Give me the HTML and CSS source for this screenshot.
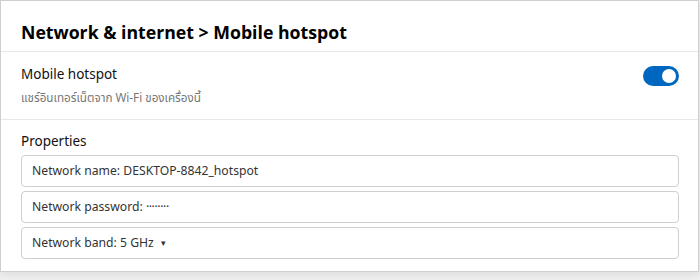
FILE: index.html
```html
<!DOCTYPE html>
<html lang="th">
<head>
<meta charset="utf-8">
<link rel="stylesheet" href="styles.css">
</head>
<body>
<div class="card">
  <div class="header">Network &amp; internet &gt; Mobile hotspot</div>
  <div class="row">
    <div class="row-text">
      <div class="row-title">Mobile hotspot</div>
      <div class="row-sub">แชร์อินเทอร์เน็ตจาก Wi-Fi ของเครื่องนี้</div>
    </div>
    <div class="toggle"><div class="knob"></div></div>
  </div>
  <div class="props">
    <div class="props-title">Properties</div>
    <div class="field">Network name: DESKTOP-8842_hotspot</div>
    <div class="field">Network password: <span class="dots">········</span></div>
    <div class="field">Network band: 5 GHz <span class="caret">▾</span></div>
  </div>
</div>
</body>
</html>
```
FILE: styles.css
```css
html, body { margin: 0; padding: 0; }
body {
  background: #f0f0f0;
  font-family: "Noto Sans Thai", "Noto Sans", sans-serif;
  color: #1a1a1a;
  width: 700px;
  height: 280px;
}
.card {
  width: 697px;
  background: #fff;
  border: 1px solid #cfcfcf;
  box-shadow: 0 3px 8px rgba(0,0,0,0.08);
}
.header {
  font-size: 17.7px;
  font-weight: 700;
  color: #000;
  padding: 19px 20px 0;
  height: 31px;
  border-bottom: 1px solid #e8e8e8;
}
.row {
  display: flex;
  align-items: flex-start;
  justify-content: space-between;
  padding: 13px 19px 0 20px;
  height: 54px;
  border-bottom: 1px solid #e8e8e8;
}
.row-title { font-size: 13.5px; color: #111; line-height: 20px; }
.row-sub { font-size: 11.7px; color: #767676; margin-top: 6px; line-height: 16px; }
.toggle {
  width: 36px; height: 20px;
  border-radius: 10px;
  background: #0067c0;
  margin-top: 1px;
  display: flex; align-items: center; justify-content: flex-end;
  padding: 0 3px;
  box-sizing: border-box;
}
.knob { width: 14px; height: 14px; border-radius: 50%; background: #fff; }
.props { padding: 13px 19px 12px 20px; display: flex; flex-direction: column; gap: 4px; }
.props-title { font-size: 13.5px; color: #111; line-height: 18px; }
.field {
  height: 32px;
  box-sizing: border-box;
  border: 1px solid #cfcfcf;
  border-radius: 4px;
  padding: 0 10px;
  display: flex; align-items: center;
  font-size: 12.2px;
  color: #333;
  white-space: pre;
}
.dots { letter-spacing: -0.4px; }
.caret { font-size: 9px; margin-left: 4px; }
```
